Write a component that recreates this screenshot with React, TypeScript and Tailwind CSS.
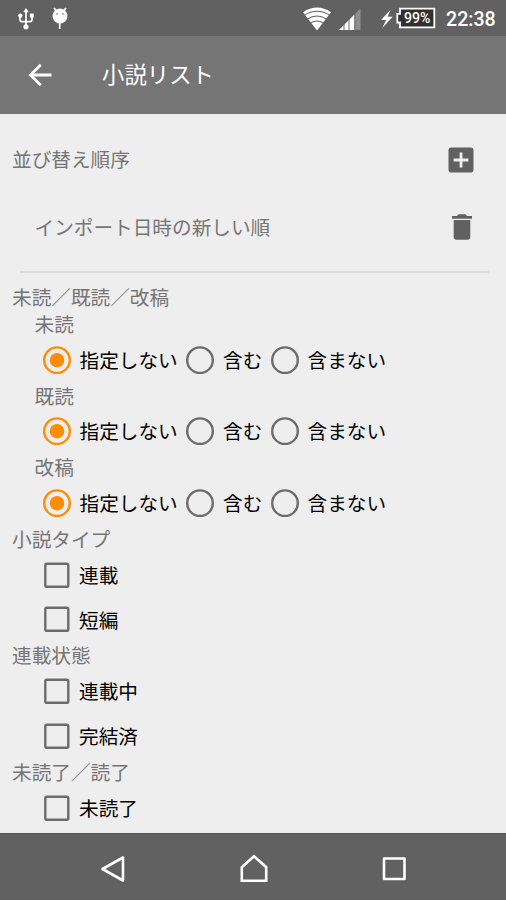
import React from "react";

function Radio({ label, checked, width }: { label: string; checked?: boolean; width: string }) {
  return (
    <label className={`flex h-full shrink-0 items-center ${width}`}>
      <svg width="28" height="28" viewBox="0 0 28 28" className="mr-[9px] shrink-0" fill="none">
        <circle cx="14" cy="14.2" r="12.8" stroke={checked ? "#ff8c05" : "#6c6c6c"} strokeWidth="2.4" />
        {checked && <circle cx="14" cy="14.2" r="7.3" fill="#ff8c05" />}
      </svg>
      <span>{label}</span>
    </label>
  );
}

function RadioGroup({ title }: { title: string }) {
  return (
    <div>
      <div className="flex h-[26.9px] items-center pl-[34.5px] text-[#757575]">{title}</div>
      <div className="flex h-[44.8px] items-center pl-[42.5px] text-black">
        <Radio label="指定しない" checked width="w-[143.5px]" />
        <Radio label="含む" width="w-[84.5px]" />
        <Radio label="含まない" width="w-[120px]" />
      </div>
    </div>
  );
}

function Heading({ children }: { children: React.ReactNode }) {
  return <div className="flex h-[26.9px] items-center pl-[12px] text-[#757575]">{children}</div>;
}

function Check({ label }: { label: string }) {
  return (
    <label className="flex h-[44.8px] items-center pl-[44px] text-black">
      <svg width="26" height="26" viewBox="0 0 26 26" className="mr-[9px] shrink-0" fill="none">
        <rect x="1.3" y="1.8" width="23" height="23" rx="1.6" stroke="#6c6c6c" strokeWidth="2.4" />
      </svg>
      <span>{label}</span>
    </label>
  );
}

function StatusBar() {
  return (
    <div className="flex h-[36px] shrink-0 items-center bg-[#616161] text-white">
      <svg width="80" height="36" viewBox="0 0 80 36" fill="none" stroke="#fff" strokeWidth="1.7">
        <path d="M26 10v17M20 15v4.5q0 2.2 2 2.2h8q2 0 2-2.2V15" />
        <path d="M26 8l-2.8 4.2h5.6z" fill="#fff" stroke="none" />
        <circle cx="20.3" cy="15.6" r="2.2" fill="#fff" stroke="none" />
        <rect x="29.9" y="13.5" width="3.8" height="4" fill="#fff" stroke="none" />
        <circle cx="26" cy="26.8" r="2.6" fill="#fff" stroke="none" />
        <circle cx="60" cy="16" r="7.5" fill="#fff" stroke="none" />
        <path d="M54 8l2.6 3.2M66 8l-2.6 3.2M59.7 22v7" />
        <circle cx="57" cy="14" r=".8" fill="#616161" stroke="none" />
        <circle cx="63" cy="14" r=".8" fill="#616161" stroke="none" />
      </svg>
      <svg className="ml-auto" width="140" height="36" viewBox="300 0 140 36" fill="none">
        <path d="M303 12.2Q317 3 331 12.2L317 30.5z" fill="#fff" />
        <path d="M304.5 15.1Q317 7.4 329.5 15.1M307.4 19.1Q317 12.9 326.6 19.1M310.4 23.1Q317 18.9 323.6 23.1" stroke="#616161" strokeWidth="1.1" />
        <path d="M339 30L360.5 8.5V30z" fill="#8f8f8f" />
        <path d="M339 30L354.5 14.5V30z" fill="#fff" />
        <path d="M344 23v7M349 18v12M354.8 13v17" stroke="#616161" strokeWidth=".9" />
        <path d="M390.5 9.8l-9.4 10.2h5l-3.8 8 10.4-11.2h-5.2z" fill="#fff" />
        <path d="M400 8.7h34.3v18.6H400v-4.8h-2.7v-8.6h2.7z" fill="#303030" stroke="#fff" strokeWidth="1.8" />
        <text x="404" y="23.1" fill="#fff" fontFamily="Roboto, sans-serif" fontSize="14" fontWeight="500" textLength="26.5" lengthAdjust="spacingAndGlyphs">99%</text>
      </svg>
      <span className="mr-[10px] ml-[6px] w-[50px] whitespace-nowrap pt-[4px] font-['Roboto',sans-serif] text-[19.6px] font-medium leading-none">22:38</span>
    </div>
  );
}

export default function App() {
  return (
    <div className="flex h-[900px] w-[506px] flex-col overflow-hidden bg-[#eeeeee] font-['Noto_Sans_CJK_JP',sans-serif] text-[19.65px] leading-none whitespace-nowrap">
      <StatusBar />
      <header className="flex h-[78px] shrink-0 items-center bg-[#757575] text-white">
        <svg className="ml-[28px]" width="24" height="24" viewBox="0 0 24 24" fill="none" stroke="#fff" strokeWidth="2.8">
          <path d="M23.5 12H3M12.8 1.7L2.5 12l10.3 10.3" />
        </svg>
        <h1 className="ml-[50px] pb-[4px] text-[22.4px] font-normal">小説リスト</h1>
      </header>
      <main className="flex min-h-0 flex-1 flex-col overflow-hidden">
        <div className="mt-[12px] flex h-[67px] shrink-0 items-center justify-between pr-[32px] pl-[12px] text-[#757575]">
          <span className="pb-[2px]">並び替え順序</span>
          <svg width="26" height="26" viewBox="0 0 26 26">
            <rect x=".5" y=".5" width="25" height="25" rx="2.8" fill="#616161" />
            <path d="M13 5.6v14.8M5.6 13h14.8" stroke="#eee" strokeWidth="2.8" />
          </svg>
        </div>
        <div className="flex h-[68px] shrink-0 items-center justify-between pr-[34px] pl-[34.5px] text-[#757575]">
          <span>インポート日時の新しい順</span>
          <svg width="20" height="26" viewBox="0 0 20 26" fill="#616161">
            <path d="M0 1.9h5L6.5.3h7L15 1.9h5v2.8H0zM1.7 6h16.6v17q0 2.7-2.7 2.7H4.4q-2.7 0-2.7-2.7z" />
          </svg>
        </div>
        <div className="mt-[10px] mr-[17px] mb-[10.9px] ml-[20px] h-[1.5px] shrink-0 bg-[#dddddd]" />
        <Heading>未読／既読／改稿</Heading>
        <RadioGroup title="未読" />
        <RadioGroup title="既読" />
        <RadioGroup title="改稿" />
        <Heading>小説タイプ</Heading>
        <Check label="連載" />
        <Check label="短編" />
        <Heading>連載状態</Heading>
        <Check label="連載中" />
        <Check label="完結済" />
        <Heading>未読了／読了</Heading>
        <Check label="未読了" />
      </main>
      <nav className="flex h-[67px] shrink-0 items-center border-t border-[#555555] bg-[#616161] pt-[3px] pl-[99px]">
        <svg width="28" height="30" viewBox="0 0 28 30" fill="none" stroke="#fff" strokeWidth="2.6" strokeLinejoin="round">
          <path d="M24 3.5v23L3.5 15z" />
        </svg>
        <svg className="ml-[112px]" width="30" height="30" viewBox="0 0 30 30" fill="none" stroke="#fff" strokeWidth="2.6">
          <path d="M2.8 13.2L15 2.2l12.2 11v13.5H2.8z" />
        </svg>
        <svg className="ml-[111px]" width="28" height="28" viewBox="0 0 28 28" fill="none" stroke="#fff" strokeWidth="2.6" strokeLinejoin="round">
          <path d="M4 3.5h20.5v20.5H4z" />
        </svg>
      </nav>
    </div>
  );
}
